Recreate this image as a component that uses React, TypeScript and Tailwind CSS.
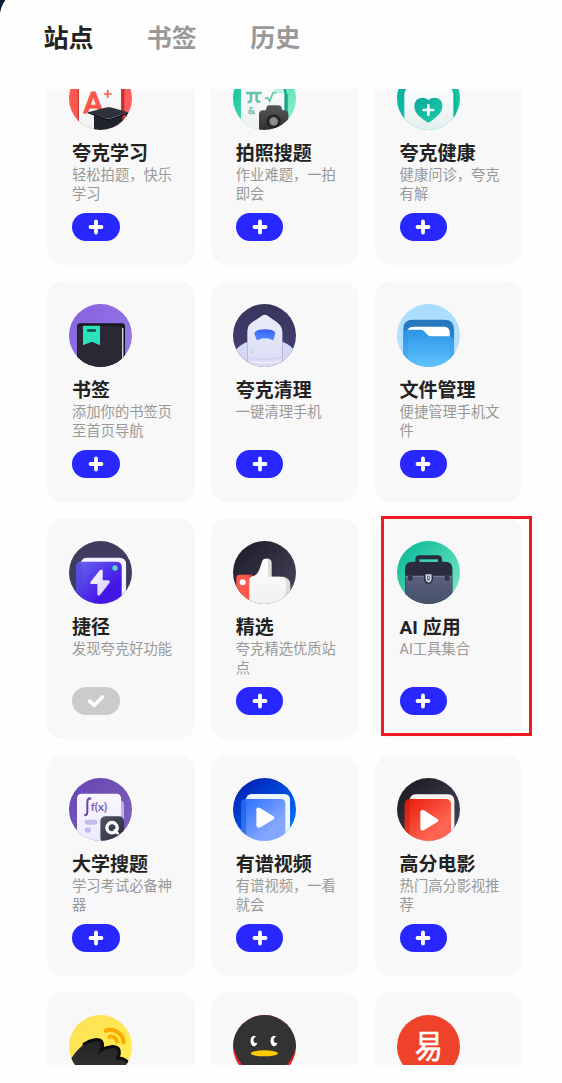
import type { ReactNode } from "react";

type Site = {
  title: string;
  desc: string;
  icon: ReactNode;
  added?: boolean;
  highlighted?: boolean;
};

function Icon({ box, children }: { box: string; children: ReactNode }) {
  return (
    <svg viewBox={box} className="block size-[63.4px] rounded-full">
      {children}
    </svg>
  );
}

function Grad({ id, from, to, x2 = 0, y2 = 1 }: { id: string; from: string; to: string; x2?: number; y2?: number }) {
  return (
    <linearGradient id={id} x1="0" y1="0" x2={x2} y2={y2}>
      <stop offset="0" stopColor={from} />
      <stop offset="1" stopColor={to} />
    </linearGradient>
  );
}

const StudyIcon = (
  <Icon box="87 -40 190 190">
    <Grad id="st1" from="#ff5548" to="#fb6068" x2={1} />
    <Grad id="st2" from="#ffffff" to="#f0f0f1" />
    <rect x="87" y="-40" width="190" height="190" fill="url(#st1)" />
    <rect x="113" y="0" width="5" height="150" fill="#c93f37" />
    <rect x="242" y="5" width="11" height="145" fill="#c9302c" />
    <rect x="117" y="-20" width="126" height="170" fill="url(#st2)" />
    <text x="131" y="97" fontSize="83" fontWeight="700" fontFamily="Lato, sans-serif" fill="#fa5648" stroke="#fa5648" strokeWidth="3">A</text>
    <path d="M203 31v20M193 41h20" stroke="#fa5648" strokeWidth="5" strokeLinecap="round" />
    <path d="M162 102L207 119L247 104V150H162Z" fill="#20222d" />
    <path d="M144 96L201 81Q206 80 211 81L265 96L210 114Q205 116 199 114Z" fill="#30313c" />
    <path d="M144 97L200 117Q205 119 210 117L265 98" fill="none" stroke="#11131c" strokeWidth="4" />
    <path d="M259 99v20" stroke="#24252f" strokeWidth="5" />
  </Icon>
);

const PhotoIcon = (
  <Icon box="83 -40 190 190">
    <Grad id="ph1" from="#02bd98" to="#86efc9" x2={1} y2={0.7} />
    <Grad id="ph2" from="#fcffff" to="#eff1f1" />
    <Grad id="ph3" from="#575757" to="#303030" />
    <rect x="83" y="-40" width="190" height="190" fill="url(#ph1)" />
    <path d="M195 20H238L247 45V110H195Z" fill="#19a486" />
    <path d="M107 -20H207L237 40V150H107Z" fill="url(#ph2)" />
    <path d="M205 20H233L237 40Q220 43 205 28Z" fill="#b9f2df" />
    <path d="M125 38H166M137 39V58Q137 64 130 65M154 39V59Q155 65 162 64" fill="none" stroke="#6ac4aa" strokeWidth="8" strokeLinecap="round" />
    <path d="M181 54L187 52L193 63L203 37H212" fill="none" stroke="#6ac4aa" strokeWidth="5" strokeLinecap="round" />
    <text x="128" y="102" fontSize="28" fontWeight="700" fontFamily="Lato, sans-serif" fill="#6ac4aa" stroke="#6ac4aa">&amp;</text>
    <path d="M161 150V102Q161 90 174 90H181L184 79Q186 75 192 75H220Q226 75 228 80L231 90H238Q249 91 249 103V150Z" fill="url(#ph3)" />
    <circle cx="205" cy="123" r="21" fill="#212121" />
    <circle cx="205" cy="123" r="13" fill="#8c8c8c" stroke="#555" strokeWidth="2" />
  </Icon>
);

const HealthIcon = (
  <Icon box="80 -40 190 190">
    <Grad id="he1" from="#00aa9c" to="#1fd0ae" x2={1} />
    <Grad id="he2" from="#fafefe" to="#e4eeee" />
    <Grad id="he3" from="#08a79a" to="#20cda9" x2={1} />
    <rect x="80" y="-40" width="190" height="190" fill="url(#he1)" />
    <path d="M235 28Q258 30 258 50V125H240Z" fill="#05bc98" />
    <path d="M102 150V45Q102 20 125 20H225Q249 20 249 45V150Z" fill="url(#he2)" />
    <path d="M80 117H102V150H80ZM249 117H270V150H249Z" fill="#e8f0f0" />
    <path d="M174 127Q168 125 157 116Q132 98 132 79Q132 53 156 52Q167 52 174 59Q181 52 194 52Q216 54 216 78Q216 98 191 115Q181 124 174 127Z" fill="url(#he3)" />
    <path d="M174 75v28M160 89h28" stroke="#fff" strokeWidth="8" strokeLinecap="round" />
  </Icon>
);

const BookmarkIcon = (
  <Icon box="27 25 190 190">
    <Grad id="bm1" from="#8461dc" to="#9c7eee" x2={1} />
    <rect x="27" y="25" width="190" height="190" fill="url(#bm1)" />
    <path d="M51 215V93Q51 83 61 83H185Q195 83 195 93V215Z" fill="#17181c" />
    <path d="M53 215V95Q55 90 61 90H184Q190 91 190 97V215Z" fill="#2a2933" />
    <path d="M188 97V200" stroke="#ddd8ed" strokeWidth="4" />
    <path d="M69 90H120V149L96 138L69 149Z" fill="#2ae2bb" />
    <rect x="81" y="101" width="27" height="7" rx="3" fill="#15473f" />
  </Icon>
);

const CleanIcon = (
  <Icon box="23 25 190 190">
    <Grad id="cl1" from="#37345b" to="#464279" />
    <Grad id="cl2" from="#ececf9" to="#d8dbf5" />
    <Grad id="cl3" from="#3564ef" to="#5688ff" />
    <rect x="23" y="25" width="190" height="190" fill="url(#cl1)" />
    <path d="M23 171Q44 146 66 138V215H23ZM171 138Q197 147 213 172V215H171Z" fill="#d3d8f3" />
    <path d="M66 215V105Q67 85 90 74L110 60Q118 54 127 60L146 74Q169 86 171 107V215Z" fill="url(#cl2)" />
    <path d="M87 113Q90 105 99 103Q118 99 139 103Q148 105 150 113L145 131Q143 135 139 132Q119 124 100 132Q95 135 93 131Z" fill="url(#cl3)" />
    <path d="M67 184Q117 199 171 184" stroke="#cdd1ea" strokeWidth="3" fill="none" />
    <path d="M75 197Q117 205 162 197" stroke="#eceefa" strokeWidth="4" fill="none" />
    <circle cx="78" cy="162" r="3" fill="#c5c8df" />
    <circle cx="78" cy="171" r="3" fill="#c5c8df" />
  </Icon>
);

const FolderIcon = (
  <Icon box="20 25 190 190">
    <Grad id="fo1" from="#a7dbff" to="#bce5ff" />
    <Grad id="fo2" from="#2877bd" to="#368fda" />
    <Grad id="fo3" from="#2c93e6" to="#60c5ff" />
    <rect x="20" y="25" width="190" height="190" fill="url(#fo1)" />
    <path d="M39 215V99Q39 72 68 72H162Q191 72 191 101V215Z" fill="url(#fo2)" />
    <path d="M50 105Q55 93 70 93H161Q178 93 178 111V130H55Z" fill="#fff" />
    <path d="M39 215V116Q41 102 55 102H91Q98 102 103 108L112 118Q116 122 123 122H176Q191 123 191 139V215H178Z" fill="url(#fo3)" />
    <path d="M39 215V120L53 106V215Z" fill="#2a86d7" opacity=".2" />
    <path d="M178 123Q191 124 191 139V215H178Z" fill="#2d8ede" opacity=".25" />
  </Icon>
);

const ShortcutIcon = (
  <Icon box="27 31 190 190">
    <Grad id="sh1" from="#6c67f3" to="#4316e6" x2={0.7} y2={0.7} />
    <Grad id="sh2" from="#ffffff" to="#cec9fb" x2={1} />
    <rect x="27" y="31" width="190" height="190" fill="#3f3c60" />
    <path d="M63 94Q67 81 80 81H178Q198 81 198 101V221H65Z" fill="#f4f2ff" />
    <path d="M48 221V108Q48 93 64 93H169Q185 93 185 109V221Z" fill="url(#sh1)" />
    <path d="M48 221V108Q48 99 55 95Q66 98 66 107V221Z" fill="#4c44cb" opacity=".5" />
    <path d="M120 118Q128 114 128 121V149H145Q152 151 148 157L120 193Q112 198 112 190V160H94Q88 158 92 153Z" fill="url(#sh2)" />
    <circle cx="165" cy="112" r="8" fill="#54dfbd" />
  </Icon>
);

const ThumbIcon = (
  <Icon box="23 31 190 190">
    <Grad id="th1" from="#191a24" to="#4b465e" x2={1} />
    <Grad id="th2" from="#ffffff" to="#f0f0f0" />
    <rect x="23" y="31" width="190" height="190" fill="url(#th1)" />
    <path d="M120 84Q138 82 139 97V138H175Q195 143 195 163V215H130Z" fill="#dbdddc" />
    <path d="M33 139Q35 132 43 132H80V221H33Z" fill="#ff5749" />
    <path d="M72 132H80L84 138L72 143Z" fill="#c93326" />
    <path d="M72 221V147Q73 138 83 137Q98 132 105 108L111 90Q114 83 121 84Q128 85 128 95V138H165Q183 142 183 161Q183 193 168 221Z" fill="url(#th2)" />
    <circle cx="52" cy="155" r="9" fill="#fff" />
  </Icon>
);

const AiIcon = (
  <Icon box="65 91 190 190">
    <Grad id="ai1" from="#00b594" to="#85edca" x2={1} />
    <Grad id="ai2" from="#5b617d" to="#46516a" />
    <rect x="65" y="91" width="190" height="190" fill="url(#ai1)" />
    <path d="M126 159V147Q126 140 133 140H187Q194 140 194 147V159" fill="none" stroke="#292b40" strokeWidth="12" />
    <path d="M89 281V175Q89 153 111 153H209Q231 153 231 175V281Z" fill="#292b40" />
    <path d="M134 151H187" stroke="#4dd5b0" strokeWidth="4" />
    <path d="M90 196H231V281H90Z" fill="url(#ai2)" />
    <path d="M90 197H231" stroke="#7880a2" strokeWidth="3" />
    <rect x="98" y="189" width="14" height="22" rx="7" fill="#323449" />
    <rect x="208" y="189" width="14" height="22" rx="7" fill="#323449" />
    <path d="M146 188H173V206Q171 220 159 220Q147 219 146 206Z" fill="#292b40" />
    <path d="M153 193H166V206Q165 212 159 213Q154 211 153 205Z" fill="#4b516a" stroke="#d2dce8" strokeWidth="5" />
    <path d="M160 197V205" stroke="#e5edf4" strokeWidth="3" />
  </Icon>
);

const MathIcon = (
  <Icon box="27 22 190 190">
    <Grad id="ma1" from="#6544b4" to="#8065ba" x2={1} />
    <Grad id="ma2" from="#f8f7ff" to="#eeeaff" />
    <Grad id="ma3" from="#4f5563" to="#252b3b" x2={1} />
    <rect x="27" y="22" width="190" height="190" fill="url(#ma1)" />
    <path d="M180 89Q192 91 192 102V150H180Z" fill="#beaef5" />
    <path d="M51 212V83Q51 69 65 69H169Q183 69 183 83V212Z" fill="url(#ma2)" />
    <path d="M91 84Q83 80 82 94V122Q82 135 75 133" fill="none" stroke="#6544a5" strokeWidth="6" strokeLinecap="round" />
    <text x="92" y="121" fontSize="36" fontWeight="700" fontFamily="Lato, sans-serif" fill="#7b5bb4" textLength="49" lengthAdjust="spacingAndGlyphs">f(x)</text>
    <rect x="74" y="147" width="38" height="15" rx="7" fill="#c5b9ef" />
    <rect x="74" y="170" width="19" height="16" rx="8" fill="#c5b9ef" />
    <rect x="121" y="137" width="71" height="80" rx="15" fill="url(#ma3)" />
    <circle cx="156" cy="171" r="15.5" fill="none" stroke="#fff" strokeWidth="10" />
    <path d="M164 179L173 188" stroke="#fff" strokeWidth="8" strokeLinecap="round" />
  </Icon>
);

const VideoIcon = (
  <Icon box="518 22 190 190">
    <Grad id="vi1" from="#0218ad" to="#0078ff" x2={0.8} />
    <Grad id="vi2" from="#266cff" to="#83a7ff" x2={0.7} y2={0.7} />
    <rect x="518" y="22" width="190" height="190" fill="url(#vi1)" />
    <path d="M556 86Q561 70 575 70H672Q689 70 689 89V212H556Z" fill="#eef9ff" />
    <path d="M542 212V99Q542 85 558 85H661Q675 85 675 99V212Z" fill="url(#vi2)" />
    <path d="M542 212V99Q542 90 550 86Q557 88 557 98V212Z" fill="#0958d8" opacity=".5" />
    <path d="M588 116Q590 107 599 112L638 136Q646 141 638 147L599 170Q590 173 588 164Z" fill="#fff" />
  </Icon>
);

const MovieIcon = (
  <Icon box="1010 22 190 190">
    <Grad id="mo1" from="#17171e" to="#4b495e" x2={1} />
    <Grad id="mo2" from="#e71907" to="#ff6453" x2={0.7} y2={0.7} />
    <rect x="1010" y="22" width="190" height="190" fill="url(#mo1)" />
    <path d="M1048 86Q1052 71 1067 71H1163Q1181 72 1182 90V212H1048Z" fill="#fff2f0" />
    <path d="M1033 212V100Q1034 85 1050 85H1158Q1172 86 1172 100V212Z" fill="url(#mo2)" />
    <path d="M1033 212V100Q1033 90 1041 86Q1048 88 1048 98V212Z" fill="#bf1c0b" opacity=".4" />
    <path d="M1080 123Q1082 115 1091 119L1130 144Q1138 149 1130 155L1091 178Q1082 183 1080 173Z" fill="#fff" />
  </Icon>
);

const WeiboIcon = (
  <Icon box="87 88 190 190">
    <Grad id="we1" from="#ffdf57" to="#fff052" x2={1} />
    <Grad id="we2" from="#222222" to="#383838" />
    <rect x="87" y="88" width="190" height="190" fill="url(#we1)" />
    <path d="M197 135Q206 130 219 133Q250 143 251 170" fill="none" stroke="#ffa800" strokeWidth="12" strokeLinecap="round" />
    <path d="M208 154Q213 151 218 153Q230 157 231 168" fill="none" stroke="#ffa800" strokeWidth="11" strokeLinecap="round" />
    <path d="M89 226C112 188 140 163 173 161C187 161 190 177 183 194C203 179 225 178 238 188C241 198 240 207 233 217C247 217 257 222 265 234L251 278H87Z" fill="url(#we2)" />
    <path d="M132 175C155 160 176 158 184 166C190 176 188 185 184 193C203 181 227 179 236 190C240 201 238 208 233 217C247 217 257 222 265 231" fill="none" stroke="#0d0d0d" strokeWidth="9" strokeLinecap="round" />
  </Icon>
);

const PenguinIcon = (
  <Icon box="579 88 190 190">
    <rect x="579" y="88" width="190" height="190" fill="#e22326" />
    <path d="M579 88H769V178Q763 215 732 246V278H614V246Q586 215 579 178Z" fill="#333" />
    <ellipse cx="642" cy="166" rx="10.5" ry="16" fill="#fff" />
    <ellipse cx="702" cy="166" rx="10.5" ry="16" fill="#fff" />
    <ellipse cx="648.5" cy="163" rx="8" ry="9" fill="#333" />
    <ellipse cx="709" cy="163" rx="8" ry="9" fill="#333" />
    <ellipse cx="673" cy="203" rx="41" ry="9" fill="#ffca00" />
  </Icon>
);

const NeteaseIcon = (
  <Icon box="1070 88 190 190">
    <rect x="1070" y="88" width="190" height="190" fill="#ee422b" />
    <text x="1123" y="218" fontSize="96" fontWeight="400" fontFamily="'Noto Sans CJK SC', sans-serif" fill="#fff" stroke="#fff" strokeWidth="2" strokeLinejoin="round" textLength="84" lengthAdjust="spacingAndGlyphs">易</text>
  </Icon>
);

const sites: Site[] = [
  { title: "夸克学习", desc: "轻松拍题，快乐学习", icon: StudyIcon },
  { title: "拍照搜题", desc: "作业难题，一拍即会", icon: PhotoIcon },
  { title: "夸克健康", desc: "健康问诊，夸克有解", icon: HealthIcon },
  { title: "书签", desc: "添加你的书签页至首页导航", icon: BookmarkIcon },
  { title: "夸克清理", desc: "一键清理手机", icon: CleanIcon },
  { title: "文件管理", desc: "便捷管理手机文件", icon: FolderIcon },
  { title: "捷径", desc: "发现夸克好功能", icon: ShortcutIcon, added: true },
  { title: "精选", desc: "夸克精选优质站点", icon: ThumbIcon },
  { title: "AI 应用", desc: "AI工具集合", icon: AiIcon, highlighted: true },
  { title: "大学搜题", desc: "学习考试必备神器", icon: MathIcon },
  { title: "有谱视频", desc: "有谱视频，一看就会", icon: VideoIcon },
  { title: "高分电影", desc: "热门高分影视推荐", icon: MovieIcon },
  { title: "", desc: "", icon: WeiboIcon },
  { title: "", desc: "", icon: PenguinIcon },
  { title: "", desc: "", icon: NeteaseIcon },
];

function SiteCard({ title, desc, icon, added, highlighted }: Site) {
  return (
    <article className="relative h-[221px] rounded-[16px] bg-[#f8f8f8] pt-[22.5px] pl-[22px]">
      {icon}
      <div className="pl-[3px]">
        <h2 className="mt-[11px] h-[24.7px] text-[19px] leading-[26px] font-bold whitespace-nowrap text-[#222]">{title}</h2>
        <p className="h-[38px] w-[104px] text-[14.3px] leading-[19px] text-[#999]">{desc}</p>
        <button
          aria-label={added ? "已添加" : "添加"}
          className={`mt-[9.3px] flex h-[28.5px] w-[47.5px] items-center justify-center rounded-full ${added ? "bg-[#cacccb]" : "bg-[#2927ff]"}`}
        >
          {added ? (
            <svg viewBox="0 0 20 16" className="h-4 w-5" fill="none" stroke="#fff" strokeWidth="3.6" strokeLinecap="round" strokeLinejoin="round">
              <path d="M3.5 8.2L8.3 12.3L16.5 4" />
            </svg>
          ) : (
            <svg viewBox="0 0 16 16" className="size-4" stroke="#fff" strokeWidth="3.8" strokeLinecap="round">
              <path d="M8 2.5V13.5M2.5 8H13.5" />
            </svg>
          )}
        </button>
      </div>
      {highlighted && <div className="absolute -top-[2px] left-[6.4px] h-[220px] w-[151px] border-3 border-[#ed1c24]" />}
    </article>
  );
}

export default function App() {
  return (
    <div className="relative h-[1083px] w-[562px] overflow-hidden bg-[#fefefe] font-[Roboto,'Noto_Sans_CJK_SC',sans-serif]">
      <svg viewBox="0 0 6 14" className="absolute top-0 left-0 h-[14px] w-[6px]">
        <path d="M0 0H5.5Q1.5 5 0 13Z" fill="#0d1d36" />
      </svg>
      <main className="h-full">
        <nav className="flex h-[89px] gap-[53.3px] pt-[21px] pl-[43.5px] text-[25px] leading-[36px] font-bold">
          <span className="text-[#222]">站点</span>
          <span className="text-[#999]">书签</span>
          <span className="text-[#999]">历史</span>
        </nav>
        <div className="h-[976px] overflow-hidden">
          <div className="-mt-[45px] grid grid-cols-[147.5px_147.5px_147.5px] gap-x-[16.3px] gap-y-4 pl-[47px]">
            {sites.map((site, i) => (
              <SiteCard key={i} {...site} />
            ))}
          </div>
        </div>
      </main>
    </div>
  );
}
